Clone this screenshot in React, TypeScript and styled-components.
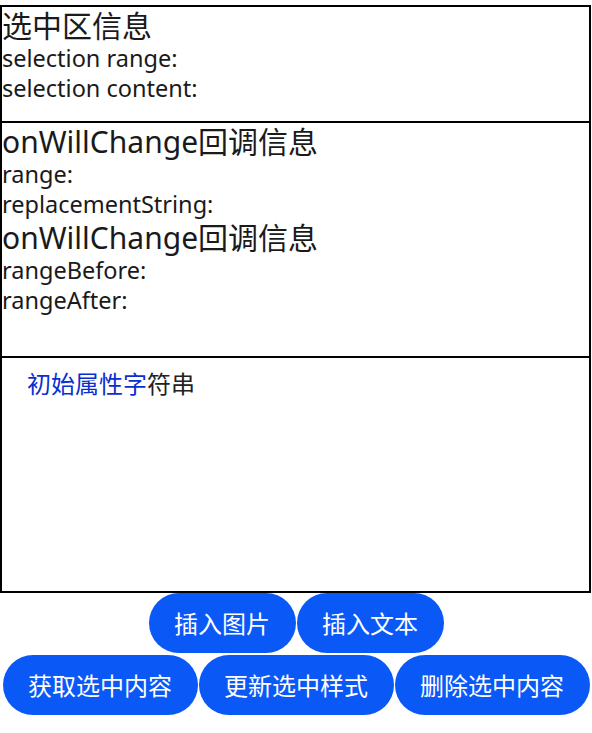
import React from "react";
import styled, { createGlobalStyle } from "styled-components";

const Global = createGlobalStyle`
  html, body { margin: 0; padding: 0; background: #ffffff; }
  body { font-family: "Noto Sans", "Noto Sans CJK SC", sans-serif; color: #1a1a1a; }
`;

const Page = styled.div`
  width: 592px;
  padding-top: 5px;
  display: flex;
  flex-direction: column;
`;

const Panel = styled.div<{ $h: number; $first?: boolean }>`
  box-sizing: border-box;
  width: 591px;
  height: ${(p) => p.$h}px;
  border: 2px solid #000;
  border-top-width: ${(p) => (p.$first ? 2 : 1)}px;
  margin-top: ${(p) => (p.$first ? 0 : -1)}px;
  display: flex;
  flex-direction: column;
  overflow: hidden;
`;

const Title = styled.div`
  font-size: 30px;
  line-height: 37px;
  white-space: nowrap;
`;

const Line = styled.div`
  font-size: 23.5px;
  line-height: 29.5px;
  white-space: nowrap;
`;

const Editor = styled.div`
  padding: 8px 0 0 25px;
  font-family: "Noto Sans CJK SC", sans-serif;
  font-size: 24px;
  line-height: 34px;
  color: #222;
`;

const Styled = styled.span`
  color: #0a2fd0;
`;

const ButtonRow = styled.div<{ $top: number }>`
  display: flex;
  justify-content: center;
  gap: 1px;
  margin-top: ${(p) => p.$top}px;
`;

const Button = styled.button`
  height: 60px;
  padding: 0 25.5px;
  border: none;
  border-radius: 30px;
  background: #0a59f7;
  color: #fff;
  font-family: "Noto Sans CJK SC", sans-serif;
  font-size: 24px;
  line-height: 60px;
  white-space: nowrap;
`;

export default function App() {
  return (
    <Page>
      <Global />
      <Panel $h={118} $first>
        <Title>选中区信息</Title>
        <Line>selection range:</Line>
        <Line>selection content:</Line>
      </Panel>
      <Panel $h={236}>
        <Title>onWillChange回调信息</Title>
        <Line>range:</Line>
        <Line>replacementString:</Line>
        <Title>onWillChange回调信息</Title>
        <Line>rangeBefore:</Line>
        <Line>rangeAfter:</Line>
      </Panel>
      <Panel $h={236}>
        <Editor>
          <Styled>初始属性字</Styled>符串
        </Editor>
      </Panel>
      <ButtonRow $top={0}>
        <Button>插入图片</Button>
        <Button>插入文本</Button>
      </ButtonRow>
      <ButtonRow $top={2}>
        <Button>获取选中内容</Button>
        <Button>更新选中样式</Button>
        <Button>删除选中内容</Button>
      </ButtonRow>
    </Page>
  );
}
